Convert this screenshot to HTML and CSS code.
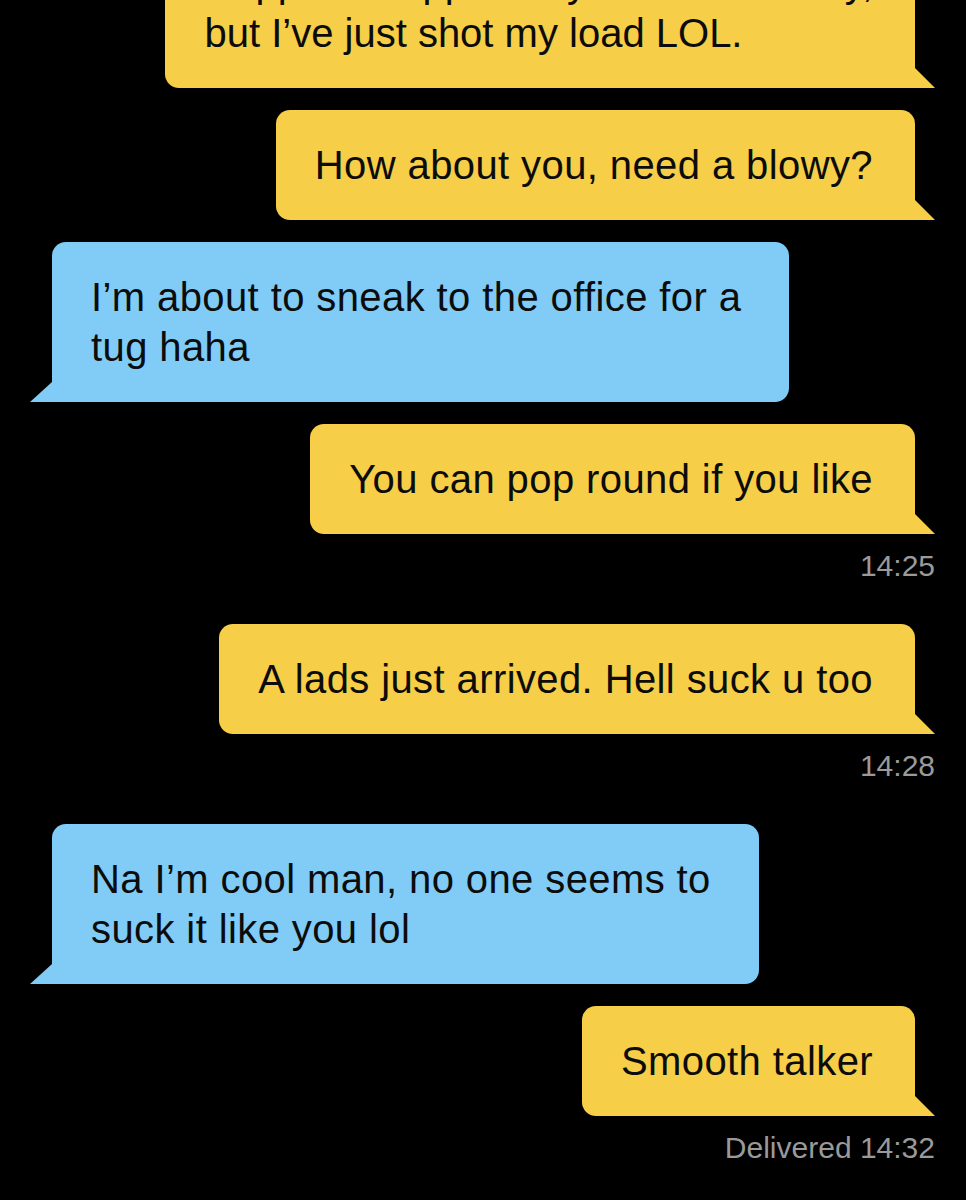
FILE: index.html
```html
<!DOCTYPE html>
<html lang="en">
<head>
<meta charset="utf-8">
<title>Chat</title>
<link rel="stylesheet" href="styles.css">
</head>
<body>
<main class="chat">
  <div class="bubble out first">Happened apparently it was so ready,<br>but I’ve just shot my load LOL.</div>
  <div class="bubble out">How about you, need a blowy?</div>
  <div class="bubble in">I’m about to sneak to the office for a<br>tug haha</div>
  <div class="bubble out">You can pop round if you like</div>
  <div class="stamp">14:25</div>
  <div class="bubble out after-stamp">A lads just arrived. Hell suck u too</div>
  <div class="stamp">14:28</div>
  <div class="bubble in after-stamp">Na I’m cool man, no one seems to<br>suck it like you lol</div>
  <div class="bubble out">Smooth talker</div>
  <div class="stamp">Delivered 14:32</div>
</main>
</body>
</html>
```

FILE: styles.css
```css
html, body {
  margin: 0;
  padding: 0;
  background: #000;
}

body {
  min-height: 1200px;
  overflow: hidden;
  font-family: "Liberation Sans", Arial, sans-serif;
}

.chat {
  display: flex;
  flex-direction: column;
  margin-top: -72px;
  padding: 0 31px 0 30px;
}

.bubble {
  position: relative;
  box-sizing: border-box;
  margin-top: 22px;
  padding: 30px 42px 30px 39px;
  border-radius: 14px;
  font-size: 40px;
  line-height: 50px;
  letter-spacing: 0.4px;
  white-space: nowrap;
  color: #0c0c0c;
}

.bubble.first {
  margin-top: 0;
  letter-spacing: 0;
}

.bubble.after-stamp {
  margin-top: 42px;
}

.bubble.out {
  align-self: flex-end;
  margin-right: 20px;
  background: #f6ce47;
  border-bottom-right-radius: 0;
}

.bubble.out::after {
  content: "";
  position: absolute;
  right: -20px;
  bottom: 0;
  width: 20px;
  height: 20px;
  background: #f6ce47;
  clip-path: polygon(0 0, 100% 100%, 0 100%);
}

.bubble.in {
  align-self: flex-start;
  margin-left: 22px;
  padding-right: 48px;
  background: #80ccf6;
  border-bottom-left-radius: 0;
}

.bubble.in::after {
  content: "";
  position: absolute;
  left: -22px;
  bottom: 0;
  width: 22px;
  height: 20px;
  background: #80ccf6;
  clip-path: polygon(100% 0, 100% 100%, 0 100%);
}

.stamp {
  align-self: flex-end;
  margin-top: 16px;
  font-size: 30px;
  line-height: 32px;
  color: #9a9a9a;
}
```
